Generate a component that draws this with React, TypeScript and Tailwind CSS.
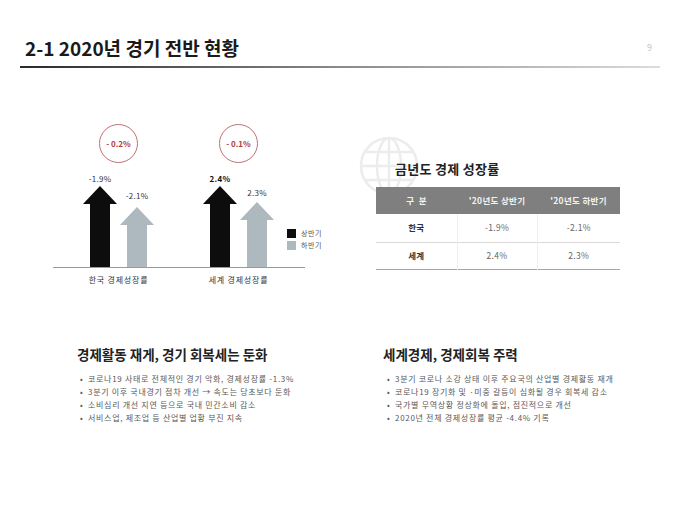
import React from 'react';

const font = { fontFamily: '"Noto Sans CJK KR", "Noto Sans", sans-serif' };

type ArrowProps = {
  label: string;
  height: number;
  gap: number;
  color: string;
  bold?: boolean;
};

function Arrow({ label, height, gap, color, bold }: ArrowProps) {
  return (
    <div className="flex flex-col items-center w-[34px]">
      <div
        className={`text-[8px] leading-[10px] tracking-[0.3px] whitespace-nowrap ${bold ? 'font-bold text-[#111]' : 'text-[#333]'}`}
        style={{ marginBottom: gap }}
      >
        {label}
      </div>
      <svg width="34" height={height} viewBox={`0 0 34 ${height}`} className="block">
        <path d={`M17 0 L34 18 L27 18 L27 ${height} L7 ${height} L7 18 L0 18 Z`} fill={color} />
      </svg>
    </div>
  );
}

function DiffCircle({ text }: { text: string }) {
  return (
    <div className="w-[39px] h-[39px] rounded-full border border-[#c07074] flex items-center justify-center">
      <span className="text-[8px] font-bold text-[#b23b3f] leading-none">{text}</span>
    </div>
  );
}

type Group = {
  diff: string;
  first: { label: string; height: number; gap: number; bold?: boolean };
  second: { label: string; height: number; gap: number };
};

const groups: Group[] = [
  {
    diff: '- 0.2%',
    first: { label: '-1.9%', height: 81, gap: 2 },
    second: { label: '-2.1%', height: 60, gap: 6 },
  },
  {
    diff: '- 0.1%',
    first: { label: '2.4%', height: 81, gap: 2, bold: true },
    second: { label: '2.3%', height: 65, gap: 4 },
  },
];

const leftBullets = [
  '코로나19 사태로 전체적인 경기 악화, 경제성장률 -1.3%',
  '3분기 이후 국내경기 점차 개선 → 속도는 당초보다 둔화',
  '소비심리 개선 지연 등으로 국내 민간소비 감소',
  '서비스업, 제조업 등 산업별 업황 부진 지속',
];

const rightBullets = [
  '3분기 코로나 소강 상태 이후 주요국의 산업별 경제활동 재개',
  '코로나19 장기화 및 ·미중 갈등이 심화될 경우 회복세 감소',
  '국가별 무역상황 정상화에 돌입, 점진적으로 개선',
  '2020년 전체 경제성장률 평균 -4.4% 기록',
];

function Globe() {
  return (
    <svg width="62" height="62" viewBox="0 0 62 62" fill="none" stroke="#ececec" strokeWidth="2.5">
      <circle cx="31" cy="31" r="28" />
      <ellipse cx="31" cy="31" rx="12" ry="28" />
      <line x1="31" y1="3" x2="31" y2="59" />
      <line x1="3" y1="31" x2="59" y2="31" />
      <line x1="8" y1="17" x2="54" y2="17" />
      <line x1="8" y1="45" x2="54" y2="45" />
    </svg>
  );
}

function Section({ title, items, bulletGap }: { title: string; items: string[]; bulletGap: number }) {
  return (
    <div className="mt-[16px]">
      <h2 className="text-[13.5px] leading-[16px] font-bold text-[#222]">{title}</h2>
      <ul className="mt-[10px]" style={{ marginLeft: bulletGap }}>
        {items.map((t) => (
          <li key={t} className="flex text-[8px] leading-[13px] tracking-[0.7px] text-[#595959] whitespace-nowrap">
            <span className="w-[8px]">•</span>
            <span>{t}</span>
          </li>
        ))}
      </ul>
    </div>
  );
}

export default function App() {
  return (
    <div className="w-[680px] h-[510px] bg-white overflow-hidden" style={font}>
      {/* Header */}
      <div className="flex items-center justify-between pt-[36px] pl-[25px] pr-[28px]">
        <h1 className="text-[19px] leading-[24px] font-bold text-[#1a1a1a]">2-1 2020년 경기 전반 현황</h1>
        <span className="text-[9px] text-[#c4c4c4]">9</span>
      </div>
      <div className="mx-[20px] mt-[6px] h-[2px] bg-gradient-to-r from-[#2a2a2a] via-[#8a8a8a] to-[#dcdcdc]" />

      {/* Chart + table */}
      <div className="flex h-[262px]">
        <div className="w-[376px] pl-[53px] pt-[56px]">
          <div className="flex items-end">
            {groups.map((g, i) => (
              <div
                key={g.diff}
                className={`flex flex-col items-center w-[71px] ${i === 0 ? 'ml-[30px]' : 'ml-[49px]'}`}
              >
                <DiffCircle text={g.diff} />
                <div className="flex items-end gap-[3px] h-[93px] mt-[11px]">
                  <Arrow {...g.first} color="#0d0d0d" />
                  <Arrow {...g.second} color="#aeb8bf" />
                </div>
              </div>
            ))}
            <div className="ml-[13px] mb-[17px] flex flex-col gap-[3px]">
              <div className="flex items-center gap-[5px]">
                <span className="w-[9px] h-[9px] bg-[#0d0d0d]" />
                <span className="text-[7px] leading-[9px] tracking-[0.6px] text-[#555]">상반기</span>
              </div>
              <div className="flex items-center gap-[5px]">
                <span className="w-[9px] h-[9px] bg-[#aeb8bf]" />
                <span className="text-[7px] leading-[9px] tracking-[0.6px] text-[#555]">하반기</span>
              </div>
            </div>
          </div>
          <div className="w-[252px] h-[1px] bg-[#9a9a9a]" />
          <div className="flex mt-[7px]">
            <div className="ml-[30px] w-[71px] flex justify-center text-[8px] leading-[10px] tracking-[0.8px] text-[#333] whitespace-nowrap">
              한국 경제성장률
            </div>
            <div className="ml-[49px] w-[71px] flex justify-center text-[8px] leading-[10px] tracking-[0.8px] text-[#333] whitespace-nowrap">
              세계 경제성장률
            </div>
          </div>
        </div>

        <div className="w-[244px] pt-[67px] relative">
          <div className="absolute left-[-18px] top-[67px]">
            <Globe />
          </div>
          <h2 className="relative mt-[26px] pl-[19px] text-[13px] leading-[16px] font-bold text-[#222] tracking-[0.3px]">
            금년도 경제 성장률
          </h2>
          <table className="relative mt-[10px] w-[244px] border-collapse text-[8.5px] tracking-[0.3px] text-center">
            <thead>
              <tr className="h-[27px] bg-[#7f7f7f] text-[#f2f2f2]">
                <th className="w-[81px] font-bold whitespace-pre">구  분</th>
                <th className="w-[80px] font-bold">'20년도 상반기</th>
                <th className="w-[83px] font-bold">'20년도 하반기</th>
              </tr>
            </thead>
            <tbody>
              <tr className="h-[28px] border-b border-[#d9d9d9]">
                <td className="font-bold text-[#333] border-r border-[#eeeeee]">한국</td>
                <td className="text-[#666] border-r border-[#eeeeee]">-1.9%</td>
                <td className="text-[#666]">-2.1%</td>
              </tr>
              <tr className="h-[27px] border-b border-[#a6a6a6]">
                <td className="font-bold text-[#333] border-r border-[#eeeeee]">세계</td>
                <td className="text-[#666] border-r border-[#eeeeee]">2.4%</td>
                <td className="text-[#666]">2.3%</td>
              </tr>
            </tbody>
          </table>
        </div>
      </div>

      {/* Bottom sections */}
      <div className="flex">
        <div className="w-[383px] pl-[77px]">
          <Section title="경제활동 재게, 경기 회복세는 둔화" items={leftBullets} bulletGap={3} />
        </div>
        <div className="flex-1">
          <Section title="세계경제, 경제회복 주력" items={rightBullets} bulletGap={4} />
        </div>
      </div>
    </div>
  );
}
